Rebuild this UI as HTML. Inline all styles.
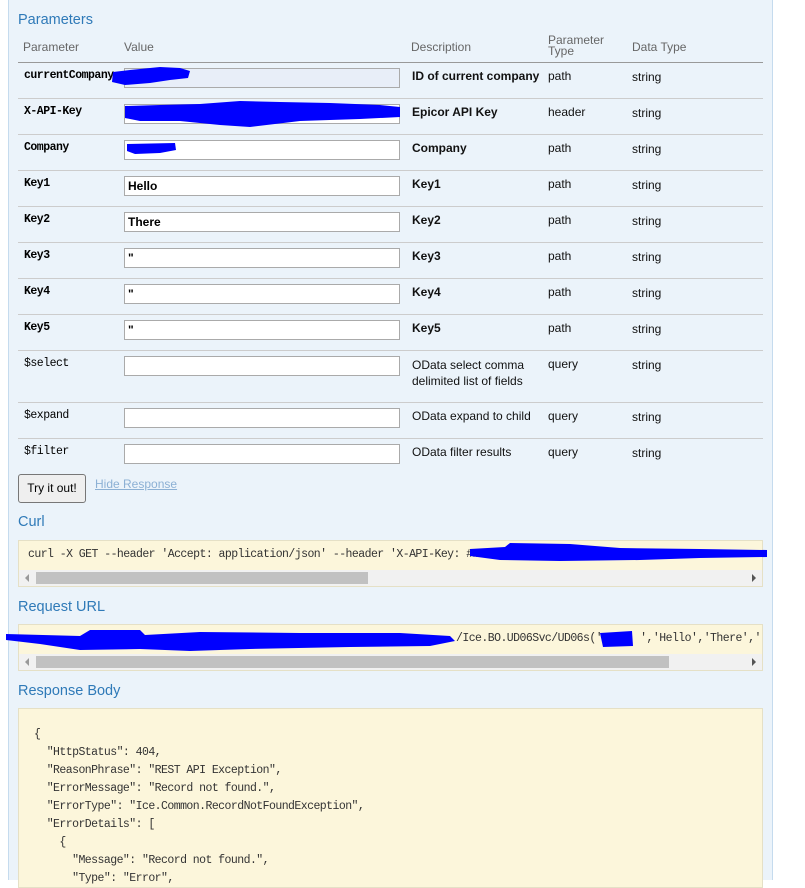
<!DOCTYPE html>
<html><head><meta charset="utf-8"><style>
*{margin:0;padding:0;box-sizing:border-box}
body{width:805px;height:880px;overflow:hidden;background:#fff;font-family:"Liberation Sans",Arial,sans-serif;position:relative}
.panel{position:absolute;left:8px;top:0;width:765px;height:880px;background:#ebf3fa;border-left:1px solid #c5dbee;border-right:1px solid #c5dbee}
.a{position:absolute;white-space:nowrap}
h3{position:absolute;font-weight:normal;font-size:14.5px;color:#2f7ab8;white-space:nowrap}
.th{font-size:12px;color:#666}
.pn{font-family:"Liberation Mono",monospace;font-size:11.5px;letter-spacing:-0.5px;color:#000}
.b{font-weight:bold}
.t{font-size:12px;color:#111}
.line{position:absolute;left:18px;width:745px;height:1px;background:#ccc}
.inp{position:absolute;left:124px;width:276px;height:20px;background:#fff;border:1px solid #aaa;font-size:12px;font-weight:bold;padding:2px 3px}
.box{position:absolute;left:18px;width:745px;background:#fcf6db;border:1px solid #e5e0c6;overflow:hidden}
.sb{position:absolute;left:0;right:0;bottom:0;height:16px;background:#f1f1f1}
.thumb{position:absolute;top:2px;height:12px;background:#c1c1c1}
.code{font-family:"Liberation Mono",monospace;font-size:11.5px;letter-spacing:-0.55px;color:#333;position:absolute;white-space:pre}
</style></head><body>
<div class="panel"></div>
<h3 style="left:18px;top:12px">Parameters</h3>
<div class="a th" style="left:23px;top:40px">Parameter</div>
<div class="a th" style="left:124px;top:40px">Value</div>
<div class="a th" style="left:411px;top:40px">Description</div>
<div class="a th" style="left:548px;top:35px;line-height:11px">Parameter<br>Type</div>
<div class="a th" style="left:632px;top:40px">Data Type</div>
<div class="line" style="top:62px;background:#999"></div>

<div class="a pn b" style="left:24px;top:69px">currentCompany</div>
<div class="inp" style="top:68px;background:#e8eef8"></div>
<div class="a t b" style="left:412px;top:69px">ID of current company</div>
<div class="a t" style="left:548px;top:69px">path</div><div class="a t" style="left:632px;top:70px">string</div>
<div class="line" style="top:98px"></div>

<div class="a pn b" style="left:24px;top:105px">X-API-Key</div>
<div class="inp" style="top:104px"></div>
<div class="a t b" style="left:412px;top:105px">Epicor API Key</div>
<div class="a t" style="left:548px;top:105px">header</div><div class="a t" style="left:632px;top:106px">string</div>
<div class="line" style="top:134px"></div>

<div class="a pn b" style="left:24px;top:141px">Company</div>
<div class="inp" style="top:140px"></div>
<div class="a t b" style="left:412px;top:141px">Company</div>
<div class="a t" style="left:548px;top:141px">path</div><div class="a t" style="left:632px;top:142px">string</div>
<div class="line" style="top:170px"></div>

<div class="a pn b" style="left:24px;top:177px">Key1</div>
<div class="inp" style="top:176px">Hello</div>
<div class="a t b" style="left:412px;top:177px">Key1</div>
<div class="a t" style="left:548px;top:177px">path</div><div class="a t" style="left:632px;top:178px">string</div>
<div class="line" style="top:206px"></div>

<div class="a pn b" style="left:24px;top:213px">Key2</div>
<div class="inp" style="top:212px">There</div>
<div class="a t b" style="left:412px;top:213px">Key2</div>
<div class="a t" style="left:548px;top:213px">path</div><div class="a t" style="left:632px;top:214px">string</div>
<div class="line" style="top:242px"></div>

<div class="a pn b" style="left:24px;top:249px">Key3</div>
<div class="inp" style="top:248px">"</div>
<div class="a t b" style="left:412px;top:249px">Key3</div>
<div class="a t" style="left:548px;top:249px">path</div><div class="a t" style="left:632px;top:250px">string</div>
<div class="line" style="top:278px"></div>

<div class="a pn b" style="left:24px;top:285px">Key4</div>
<div class="inp" style="top:284px">"</div>
<div class="a t b" style="left:412px;top:285px">Key4</div>
<div class="a t" style="left:548px;top:285px">path</div><div class="a t" style="left:632px;top:286px">string</div>
<div class="line" style="top:314px"></div>

<div class="a pn b" style="left:24px;top:321px">Key5</div>
<div class="inp" style="top:320px">"</div>
<div class="a t b" style="left:412px;top:321px">Key5</div>
<div class="a t" style="left:548px;top:321px">path</div><div class="a t" style="left:632px;top:322px">string</div>
<div class="line" style="top:350px"></div>

<div class="a pn" style="left:24px;top:357px">$select</div>
<div class="inp" style="top:356px"></div>
<div class="a t" style="left:412px;top:357px;line-height:16px">OData select comma<br>delimited list of fields</div>
<div class="a t" style="left:548px;top:357px">query</div><div class="a t" style="left:632px;top:358px">string</div>
<div class="line" style="top:402px"></div>

<div class="a pn" style="left:24px;top:409px">$expand</div>
<div class="inp" style="top:408px"></div>
<div class="a t" style="left:412px;top:409px">OData expand to child</div>
<div class="a t" style="left:548px;top:409px">query</div><div class="a t" style="left:632px;top:410px">string</div>
<div class="line" style="top:438px"></div>

<div class="a pn" style="left:24px;top:445px">$filter</div>
<div class="inp" style="top:444px"></div>
<div class="a t" style="left:412px;top:445px">OData filter results</div>
<div class="a t" style="left:548px;top:445px">query</div><div class="a t" style="left:632px;top:446px">string</div>

<div class="a" style="left:18px;top:474px;width:68px;height:29px;border:1px solid #777;border-radius:3px;background:#efefef;font-size:12px;text-align:center;line-height:27px;color:#000">Try it out!</div>
<div class="a" style="left:95px;top:477px;font-size:12px;color:#8cb0d4;text-decoration:underline">Hide Response</div>

<h3 style="left:18px;top:514px">Curl</h3>
<div class="box" style="top:540px;height:47px">
<div class="code" style="left:9px;top:7px">curl -X GET --header 'Accept: application/json' --header 'X-API-Key: ###########</div>
<div class="sb"><div class="a" style="left:6px;top:4px;width:0;height:0;border-top:4px solid transparent;border-bottom:4px solid transparent;border-right:4px solid #999"></div><div class="thumb" style="left:17px;width:332px"></div><div class="a" style="left:733px;top:4px;width:0;height:0;border-top:4px solid transparent;border-bottom:4px solid transparent;border-left:4px solid #555"></div></div>
</div>

<h3 style="left:18px;top:599px">Request URL</h3>
<div class="box" style="top:624px;height:47px">
<div class="code" style="left:437px;top:7px">/Ice.BO.UD06Svc/UD06s('      ','Hello','There','''</div>
<div class="sb"><div class="a" style="left:6px;top:4px;width:0;height:0;border-top:4px solid transparent;border-bottom:4px solid transparent;border-right:4px solid #999"></div><div class="thumb" style="left:17px;width:633px"></div><div class="a" style="left:733px;top:4px;width:0;height:0;border-top:4px solid transparent;border-bottom:4px solid transparent;border-left:4px solid #555"></div></div>
</div>

<h3 style="left:18px;top:683px">Response Body</h3>
<div class="box" style="top:708px;height:180px">
<div class="code" style="left:15px;top:17px;line-height:18px">{
  "HttpStatus": 404,
  "ReasonPhrase": "REST API Exception",
  "ErrorMessage": "Record not found.",
  "ErrorType": "Ice.Common.RecordNotFoundException",
  "ErrorDetails": [
    {
      "Message": "Record not found.",
      "Type": "Error",</div>
</div>

<svg class="a" style="left:0;top:0" width="805" height="880">
<g fill="#0000ff">
<path d="M113 72 L130 70 L160 67 L180 68 L190 71 L188 78 L170 80 L150 83 L125 85 L112 82 Z"/>
<path d="M125 106 L160 105 L200 104 L240 101 L280 102 L330 103 L380 105 L400 107 L400 117 L360 119 L300 121 L250 127 L220 125 L180 121 L140 121 L125 118 Z"/>
<path d="M127 144 L175 143 L176 150 L160 153 L135 154 L127 151 Z"/>
<path d="M470 549 L505 547 L510 543 L570 544 L620 548 L700 549 L767 550 L767 557 L700 558 L640 560 L560 561 L500 560 L470 556 Z"/>
<path d="M6 634 L80 636 L90 630 L140 630 L145 635 L200 632 L300 633 L400 633 L450 636 L455 641 L430 646 L350 647 L250 649 L190 651 L140 649 L80 650 L40 644 L6 640 Z"/>
<path d="M600 633 L632 631 L633 646 L603 647 Z"/>
</g>
</svg>
</body></html>
